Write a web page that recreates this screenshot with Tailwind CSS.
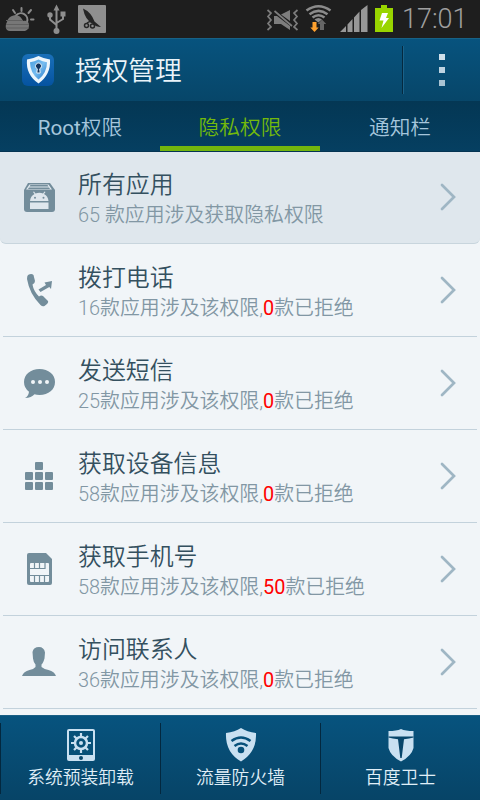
<!DOCTYPE html>
<html lang="zh-CN">
<head>
  <meta charset="UTF-8" />
  <meta name="viewport" content="width=device-width, initial-scale=1.0" />
  <title>授权管理</title>
  <script src="https://cdn.jsdelivr.net/npm/@tailwindcss/browser@4"></script>
</head>
<body class="w-[480px] h-[800px] overflow-hidden flex flex-col bg-[#f1f5f8] font-['Roboto','Noto_Sans_CJK_SC',sans-serif] whitespace-nowrap">

  <!-- Status bar -->
  <div class="h-[38px] shrink-0 bg-[#1e1e1e] flex">
    <svg class="w-[110px] h-[38px]" viewBox="0 0 110 38">
      <g stroke="#8a8a8a" stroke-width="2" stroke-linecap="round" fill="none">
        <path d="M16 15.500a6.500 6.500 0 0 1 11 6.500M13 10l2 3M21.500 8v3M31 10l-2.500 3M31 19.500h2.500"/>
      </g>
      <path d="M10 31c-5 0-5-6-3-9 1-5 7-8 12-6 2 1 3 3 4 5 4-1 6 1 6 4s-1 5-4 6z" fill="#777"/>
      <path d="M6 20.500h17M6 24.500h23M6 28h23" stroke="#606060" stroke-width="1"/>
      <g stroke="#8e8e8e" stroke-width="2" fill="none">
        <path d="M56.500 8v23M50 15v4.500l6.500 5.500M63 14v5l-6.500 4"/>
      </g>
      <path d="M56.500 4.500l3 6h-6z" fill="#8e8e8e"/>
      <circle cx="50" cy="15" r="2.700" fill="#8e8e8e"/>
      <path d="M60.500 11.500h5v5h-5z" fill="#8e8e8e"/>
      <circle cx="56.500" cy="31" r="3" fill="#8e8e8e"/>
      <rect x="78" y="5" width="28" height="28" rx="1" fill="#8f8f8f"/>
      <path d="M83 8.500q8 3.500 11.500 13l6.500 5.500q-5 0-8-3-8-4-10-15.500z" fill="#252525"/>
      <path d="M87 23q4-3 7 0" fill="none" stroke="#252525" stroke-width="1.500"/>
      <circle cx="86.500" cy="25.500" r="2" fill="none" stroke="#252525" stroke-width="1.500"/>
      <circle cx="92.500" cy="26" r="2" fill="none" stroke="#252525" stroke-width="1.500"/>
    </svg>
    <svg class="ml-auto w-[140px] h-[38px]" viewBox="260 0 140 38">
      <!-- vibrate / muted -->
      <g stroke="#7d7d7d" stroke-width="1.700" fill="none">
        <path d="M267.500 10l3.500 3-3 3.500 3 3.500-3 3.500 3 3.500-3.500 3M297.500 10l-3.500 3 3 3.500-3 3.500 3 3.500-3 3.500 3.500 3"/>
      </g>
      <path d="M274 16l3 0 13 10v4l-9-6h-7zM281 14.500l9-4.500v11z" fill="#7d7d7d"/>
      <path d="M274.500 11l17.500 15" stroke="#7d7d7d" stroke-width="1.700"/>
      <!-- wifi -->
      <g fill="none" stroke="#8b8b8b" stroke-width="2.600">
        <path d="M306.500 10.500q12-8.500 24 0M309.500 14.200q9-6.500 18 0M312.500 17.500q6-4.500 12 0"/>
      </g>
      <path d="M314.500 19.500q4-3 7.500 0l-3.700 3z" fill="#8b8b8b"/>
      <path d="M312.500 22h4v5.500h2.200l-4.200 4.500-4.200-4.500h2.200z" fill="#ffa12e"/>
      <path d="M320 30v-6h-2.200l4.200-4.500 4.200 4.500h-2.200v6z" fill="#666"/>
      <!-- signal -->
      <path d="M340 32l6-6v6zM347.500 32v-7.500l5-5.500v13zM354 32v-14.500l5.500-6v20.500zM361 32v-22l6.500-5v27z" fill="#989898"/>
      <!-- battery -->
      <path d="M381 5h6v3h6v24h-18v-24h6z" fill="#99d500"/>
      <path d="M382 13h6l-2 5h3l-7.500 10 2-7.500h-4z" fill="#fff"/>
    </svg>
    <div class="w-20 pl-[2px] text-[27px] leading-[38px] font-light text-[#a0a0a0]">17:01</div>
  </div>

  <!-- Title bar -->
  <header class="h-[63px] shrink-0 flex items-center bg-linear-to-b from-[#07537e] to-[#074669] border-t border-[#176287]">
    <svg class="ml-[22px] w-8 h-8" viewBox="0 0 32 32">
      <defs>
        <linearGradient id="logo" x1="0" y1="0" x2="0" y2="1"><stop stop-color="#1a70b9"/><stop offset="1" stop-color="#0553a0"/></linearGradient>
        <linearGradient id="inner" x1="0" y1="0" x2="1" y2="1"><stop stop-color="#4ba0e0"/><stop offset=".5" stop-color="#77bdf0"/><stop offset="1" stop-color="#2277c8"/></linearGradient>
      </defs>
      <rect width="32" height="32" rx="6" fill="url(#logo)"/>
      <path d="M16.500 2q5 2.500 11.500 3.500 1 15-11.500 24-13-9-11.500-24 6.500-1 11.500-3.500z" fill="#edf6fc"/>
      <path d="M16.500 5.500q4 2 8.500 2.700 0 10.500-8.500 17.300-8.500-6.800-8.500-17.300 4.500-.7 8.500-2.700z" fill="url(#inner)"/>
      <path d="M14.800 19l.5-4.200a3 3 0 1 1 2.400 0l.5 4.200z" fill="#12345e" stroke="#e8f3fb" stroke-width="1"/>
    </svg>
    <h1 class="ml-[21px] pt-0.5 text-[26.7px] leading-none font-[350] text-[#eaf4fa]">授权管理</h1>
    <div class="ml-auto h-12 w-px bg-[#05293f] border-r border-[#1b6289] box-content"></div>
    <div class="w-[76px] flex flex-col items-center gap-[7px]">
      <i class="size-1.5 bg-[#cfe0eb]"></i>
      <i class="size-1.5 bg-[#bdd3e1]"></i>
      <i class="size-1.5 bg-[#a9c3d3]"></i>
    </div>
  </header>

  <!-- Tabs -->
  <nav class="h-[51px] shrink-0 grid grid-cols-3 text-center text-[20.7px] leading-[54px] font-[350] bg-linear-to-b from-[#043754] to-[#053f61] text-[#a5c6dc] border-b border-[#043452]">
    <a class="h-[50px]"><span class="font-normal">Root</span>权限</a>
    <a class="h-[50px] text-[#73b90c] border-b-5 border-[#73b60d]">隐私权限</a>
    <a class="h-[50px]">通知栏</a>
  </nav>

  <!-- Permission list -->
  <ul id="perm-list" class="h-[563px] shrink-0 overflow-hidden"></ul>

  <!-- Bottom bar -->
  <footer class="h-[85px] shrink-0 grid grid-cols-3 pb-2 pt-[7px] bg-linear-to-b from-[#07537e] to-[#074467] text-[#e0eff8] text-[17.8px] font-[350] border-t border-[#1a5f85]">
    <a class="flex flex-col items-center border-l border-[#03283f] pt-[5px]">
      <svg class="w-8 h-8.5" viewBox="0 0 32 34">
        <rect x="2" y="1" width="28" height="32" rx="2" fill="#c9e0f1"/>
        <path d="M4 3h24v24h-24z" fill="#075078"/>
        <circle cx="16" cy="15" r="6" fill="none" stroke="#c9e0f1" stroke-width="2.500"/>
        <circle cx="16" cy="15" r="2" fill="#c9e0f1"/>
        <path d="M16 5v4M16 21v4M6 15h4M22 15h4M9 8l3 3M20 19l3 3M23 8l-3 3M12 19l-3 3" stroke="#c9e0f1" stroke-width="2.200"/>
        <circle cx="16" cy="30" r="2" fill="#07456a"/>
      </svg>
      <span class="leading-8">系统预装卸载</span>
    </a>
    <a class="flex flex-col items-center border-l border-[#03283f] pt-[5px]">
      <svg class="w-8 h-8.5" viewBox="0 0 32 34">
        <path d="M16 0q6 4 15 5 1 19-15 28.500-16-9.500-15-28.500 9-1 15-5z" fill="#c9e0f1"/>
        <path d="M6.500 13q9.500-7 19 0M9.500 18q6.500-5 13 0" fill="none" stroke="#07507a" stroke-width="2.500"/>
        <circle cx="16" cy="22" r="3.300" fill="#07507a"/>
      </svg>
      <span class="leading-8">流量防火墙</span>
    </a>
    <a class="flex flex-col items-center border-l border-[#03283f] pt-[5px]">
      <svg class="w-8 h-8.5" viewBox="0 0 32 34">
        <path d="M3.500 3q8 0 12.500-2 4.500 2 12.500 2v17q-2 8-12.500 13.500-10.500-5.500-12.500-13.500z" fill="#c9e0f1"/>
        <path d="M3.500 8.500h25v1q-4 1.200-9.500 1.700l-2.300 18.800h-1.400l-2.300-18.800q-5.500-.5-9.500-1.700z" fill="#07456a"/>
      </svg>
      <span class="leading-8">百度卫士</span>
    </a>
  </footer>

  <script>
    // 40x40 图标
    const icons = {
      apps: '<path d="M9 4h22l5 7v19q0 3-3 3h-25q-3 0-3-3v-19z"/><path d="M10.500 5.500h19l3.500 5h-26z" fill="#dfe7ed"/><path d="M11.500 6h17l1 1.500h-19zM10 8.500h20l1 1.500h-22z"/><path d="M11 22q.5-5 4.500-7l-1.500-2 1-.5 1.500 2q4-1.300 7.500 0l1.500-2 1 .5-1.500 2q4 2 4.500 7zM11 23.500h18.500v6.500h-18.500z" fill="#dfe7ed"/><circle cx="16" cy="18.700" r="1"/><circle cx="24.500" cy="18.700" r="1"/>',
      phone: '<path d="M9 4q3.500-2 5.500 0l1.500 6q0 2-2.500 3.500 1 6.500 6.500 12 2-1.500 4-.5l5 5q1 2-3.500 5-2 1-4-1-11-11-13.500-26 0-3 1-4z"/><path d="M19.500 18.500l7.500-4.500-1.500-2.500 7.500-1.500-1 8-1.700-2-8.800 5z"/>',
      sms: '<path d="M20.500 5c9 0 15.500 5.500 15.500 13s-6.500 13-15.500 13q-3 0-5-.8-3 3.500-9.500 3.800 3.500-2 4-6.300-5-3.700-5-9.700c0-7.500 6.500-13 15.500-13z"/><g fill="#f1f5f8"><circle cx="14" cy="18" r="2"/><circle cx="21" cy="18" r="2"/><circle cx="28" cy="18" r="2"/></g>',
      device: '<rect x="16" y="5" width="8" height="8" rx="1"/><rect x="6" y="15" width="8" height="8" rx="1"/><rect x="16" y="15" width="8" height="8" rx="1"/><rect x="26" y="15" width="8" height="8" rx="1"/><rect x="6" y="25" width="8" height="8" rx="1"/><rect x="16" y="25" width="8" height="8" rx="1"/><rect x="26" y="25" width="8" height="8" rx="1"/>',
      sim: '<path d="M10 3h17l6 6v24q0 2-2 2h-21q-2 0-2-2v-28q0-2 2-2z"/><path d="M11 14q0-1 1-1h17q1 0 1 1v17q0 1-1 1h-17q-1 0-1-1z" fill="#f1f5f8"/><path d="M10 18.500h16v-6M15.500 13v6M20.500 13v6M10 25.500h21M15.500 25.500v7M20.500 25.500v7M25.500 25.500v7" fill="none" stroke="#738d9b" stroke-width="1.200"/>',
      contact: '<path d="M13.500 9q1-5 6.500-5 5 0 6 5.500l-.5 6q-1.500 5-3 6v2.500q3 2.500 7 3 6 1.500 7.500 6h-34q1.500-4.500 7.500-6 4-.5 6-3v-2.500q-2-2-2.500-6z"/>'
    };
    const perms = [
      { icon: 'apps', nama: '所有应用', total: 65, all: true },
      { icon: 'phone', nama: '拨打电话', total: 16, denied: 0 },
      { icon: 'sms', nama: '发送短信', total: 25, denied: 0 },
      { icon: 'device', nama: '获取设备信息', total: 58, denied: 0 },
      { icon: 'sim', nama: '获取手机号', total: 58, denied: 50 },
      { icon: 'contact', nama: '访问联系人', total: 36, denied: 0 }
    ];
    document.getElementById('perm-list').innerHTML = perms.map(p => `
      <li class="${p.all ? 'h-[92px] bg-[#dfe7ed] rounded-b-md border-b border-[#c8d5dd]' : 'h-[93px] mx-[3px] border-b border-[#c3d2dc]'}">
        <div class="flex h-full items-center ${p.all ? 'pl-[19px] pr-6' : 'pl-4 pr-[21px]'}">
          <svg class="mt-0.5 size-10 shrink-0" viewBox="0 0 40 40" fill="#738d9b">${icons[p.icon]}</svg>
          <div class="ml-[19px] flex-1 ${p.all ? 'pt-[3px]' : 'pt-1'}">
            <div class="text-[23.9px] leading-[34px] font-[350] text-[#34505f]">${p.nama}</div>
            <div class="text-[19.9px] leading-[28px] font-[350] text-[#8297a4]">${p.all
              ? `${p.total} 款应用涉及获取隐私权限`
              : `${p.total}款应用涉及该权限,<span class="font-normal text-[#ff0000]">${p.denied}</span>款已拒绝`}</div>
          </div>
          <svg class="mb-px w-4 h-7" viewBox="0 0 16 28" fill="none" stroke="#9fb6c4" stroke-width="2.700" stroke-linecap="round"><path d="M2 2l12 12-12 12"/></svg>
        </div>
      </li>
    `).join('');
  </script>
</body>
</html>
